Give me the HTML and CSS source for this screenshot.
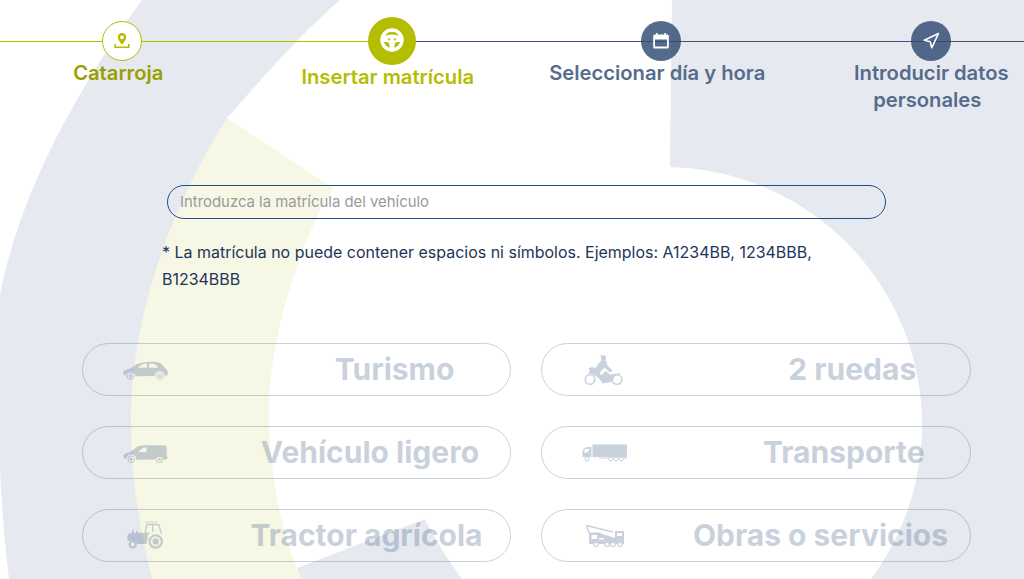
FILE: index.html
```html
<!DOCTYPE html>
<html lang="es">
<head>
  <meta charset="UTF-8" />
  <meta name="viewport" content="width=device-width, initial-scale=1" />
  <title>Cita previa ITV</title>
  <link rel="stylesheet" href="styles.css">
</head>
<body>

  <!-- Fondo -->
  <svg class="bg-shapes" viewBox="0 0 1024 579" aria-hidden="true">
    <path class="bg-gray" d="M142,0 L340,0 C300,35 265,75 227,118 L200,579 L9,579 Q3,530 0,470 L0,295 C20,190 80,85 142,0 Z" />
    <path class="bg-gray" d="M672,0 L1024,0 L1024,579 L871,579 A258,258 0 0 0 670,167 Z" />
    <path class="bg-gray" d="M297,568 L425,519 C435,540 448,560 462,579 L301,579 Z" />
    <path class="bg-yellow" d="M227,118 L333,188 C300,240 269,340 269,410 C269,470 280,530 301,579 L152,579 C140,530 131,480 131,420 C131,310 175,200 227,118 Z" />
  </svg>

  <!-- Pasos -->
  <div class="stepper">
    <div class="step step-done">
      <div class="step-circle">
        <svg width="20" height="20" viewBox="0 0 20 20">
          <path fill="#b5bd00" fill-rule="evenodd" d="M10,2 C7.6,2 5.8,3.8 5.8,6.2 C5.8,9 8.6,11.8 10,13.6 C11.4,11.8 14.2,9 14.2,6.2 C14.2,3.8 12.4,2 10,2 Z M10,4.4 A1.9,1.9 0 1 1 10,8.2 A1.9,1.9 0 1 1 10,4.4 Z" />
          <path fill="#b5bd00" d="M2.4,13 L4,13 L4,15.6 L16,15.6 L16,13 L17.6,13 L17.6,17 L2.4,17 Z" />
        </svg>
      </div>
      <div class="step-label">Catarroja</div>
    </div>
    <div class="step step-active">
      <div class="step-circle">
        <svg width="26" height="26" viewBox="0 1 26 26">
          <circle cx="13" cy="13" r="10" fill="none" stroke="#fff" stroke-width="3.4" />
          <path fill="#fff" d="M3,10 C8,6.6 18,6.6 23,10 L23,15 L18.6,15 C17,15 16,16 15.6,17.5 L15.4,22 L10.6,22 L10.4,17.5 C10,16 9,15 7.400,15 L3,15 Z" />
          <circle cx="10.200" cy="12.400" r="1.100" fill="#b5bd00" />
          <circle cx="15.800" cy="12.400" r="1.100" fill="#b5bd00" />
        </svg>
      </div>
      <div class="step-label">Insertar matrícula</div>
    </div>
    <div class="step">
      <div class="step-circle">
        <svg width="18" height="18" viewBox="0 0 18 18">
          <path fill="#fff" fill-rule="evenodd" d="M4,1 L5.6,1 L5.6,2.4 L12.4,2.4 L12.4,1 L14,1 L14,2.4 L15.2,2.4 C16.2,2.4 16.8,3 16.8,4 L16.8,15 C16.8,16 16.2,16.6 15.2,16.6 L2.8,16.6 C1.8,16.6 1.2,16 1.2,15 L1.2,4 C1.2,3 1.8,2.4 2.8,2.4 L4,2.4 Z M3,7.6 L3,14.4 L15,14.4 L15,7.6 Z" />
        </svg>
      </div>
      <div class="step-label">Seleccionar día y hora</div>
    </div>
    <div class="step step-last">
      <div class="step-circle">
        <svg width="18" height="18" viewBox="0 0 24 24">
          <polygon points="3 11 22 2 13 21 11 13 3 11" fill="none" stroke="#fff" stroke-width="2.2" stroke-linejoin="round" />
        </svg>
      </div>
      <div class="step-label">Introducir datos personales</div>
    </div>
  </div>

  <div class="content">
    <div class="plate-box">
      <input type="text" class="plate-input" placeholder="Introduzca la matrícula del vehículo">
      <p class="plate-note">* La matrícula no puede contener espacios ni símbolos. Ejemplos: A1234BB, 1234BBB, B1234BBB</p>
    </div>

    <div class="vehicle-grid">
      <div class="vehicle">
        <svg class="vehicle-icon" width="45" height="20" viewBox="0 0 45 20">
          <path fill-rule="evenodd" d="M0.5,14 C0,11 2,10 7,8.800 L13,4.600 C17,2.600 23,1.800 29,1.800 C35,1.800 38.500,3 40.500,6.500 C43,9 45,10.500 45,13 L44,15.500 L41.800,16 A5,5 0 0 0 31.800,16 L12.500,16.300 A5.200,5.200 0 0 0 2.200,16.200 Z M15,7.800 L24,7.800 L24,3.600 C20,3.800 17,5 15,7.800 Z M26,7.800 L35,7.800 C34.500,5.400 32,3.600 26,3.600 Z" />
          <circle cx="7.300" cy="16" r="3.400" fill="none" stroke="#2b4c7a" stroke-width="1" />
          <circle cx="7.300" cy="16" r="1.500" />
          <circle cx="36.800" cy="16" r="3.400" fill="none" stroke="#2b4c7a" stroke-width="1" />
          <circle cx="36.800" cy="16" r="1.500" />
        </svg>
        <div class="vehicle-name"><span>Turismo</span></div>
      </div>
      <div class="vehicle">
        <svg class="vehicle-icon" width="45" height="32" viewBox="0 0 45 32">
          <circle cx="21.500" cy="3.800" r="2.600" />
          <path d="M17.500,1.500 L20,1.800 L20,3.500 Z" />
          <path d="M19.500,6 L23.800,6.300 L25.500,11.500 L30.500,16.500 L28,18.500 L22.500,13.500 L17,19.500 L12.500,15 Z" />
          <path d="M6.500,14.500 C10,12.600 13,13 15,16 L19,21 L24,17 L28,20.500 L40,19 L33,22 L29,28 L21,29.500 L17,24.500 C13,20.500 9,19.500 6,19.500 L8,17 Z" />
          <circle cx="8" cy="25.500" r="4.800" fill="none" stroke="#2b4c7a" stroke-width="1.500" />
          <circle cx="35" cy="25.500" r="4.800" fill="none" stroke="#2b4c7a" stroke-width="1.500" />
        </svg>
        <div class="vehicle-name"><span>2 ruedas</span></div>
      </div>
      <div class="vehicle">
        <svg class="vehicle-icon" width="45" height="20" viewBox="0 0 45 20">
          <path fill-rule="evenodd" d="M0.500,14 C0,11.500 2,10.500 6,9.800 L14,4 C16,2.800 19,2.300 25,2.300 L41.500,2.200 C42.700,2.200 43.300,3 43.500,4 L44,14 L45,15 L43,16.500 L41,16.500 A5,5 0 0 0 32,16.500 L13.500,16.800 A5.200,5.200 0 0 0 3,16.500 Z M15,9 L23.500,9 L23.500,4.400 L20.500,4.400 Z" />
          <circle cx="8.300" cy="16.300" r="3.400" fill="none" stroke="#2b4c7a" stroke-width="1" />
          <circle cx="8.300" cy="16.300" r="1.500" />
          <circle cx="36.500" cy="16.300" r="3.400" fill="none" stroke="#2b4c7a" stroke-width="1" />
          <circle cx="36.500" cy="16.300" r="1.500" />
        </svg>
        <div class="vehicle-name"><span>Vehículo ligero</span></div>
      </div>
      <div class="vehicle">
        <svg class="vehicle-icon" width="45" height="18" viewBox="0 0 45 18">
          <rect x="10.500" y="0.500" width="34.500" height="12.500" />
          <path fill-rule="evenodd" d="M9.500,3 L9.500,13 L0.500,13 L0.500,9 C0.500,6 2,3.500 6,3 Z M3,5 L2,8.500 L5.500,8.500 L7.500,5 Z" />
          <path d="M17,13.500 L45,13.500 L45,14.500 L17,14.500 Z" />
          <circle cx="5" cy="15" r="2" fill="#fff" stroke="#2b4c7a" stroke-width="1" />
          <circle cx="29" cy="15" r="2" fill="#fff" stroke="#2b4c7a" stroke-width="1" />
          <circle cx="34" cy="15" r="2" fill="#fff" stroke="#2b4c7a" stroke-width="1" />
          <circle cx="39" cy="15" r="2" fill="#fff" stroke="#2b4c7a" stroke-width="1" />
        </svg>
        <div class="vehicle-name"><span>Transporte</span></div>
      </div>
      <div class="vehicle">
        <svg class="vehicle-icon" width="45" height="30" viewBox="0 0 45 30">
          <path d="M22,1 L34,1" fill="none" stroke="#2b4c7a" stroke-width="0.800" />
          <path d="M24,3.500 L35.500,3.500 L38.500,12.500 M24,3.500 L22,12 M29.700,3.500 L29.700,11" fill="none" stroke="#2b4c7a" stroke-width="1.300" />
          <path d="M4.500,15 C4.500,13 6.500,12 9,12 L9.500,8.500 L10.500,8.500 L11,12 L13,12 L13.500,9.500 L14.500,9.500 L15,12 L27,11.500 L25,14 L23.500,23 L14,23 C13,20 9,18.500 4.500,20 Z" />
          <circle cx="9.700" cy="23.500" r="3.100" fill="none" stroke="#2b4c7a" stroke-width="1.800" />
          <circle cx="32.700" cy="20.500" r="6.200" fill="none" stroke="#2b4c7a" stroke-width="2.200" />
          <circle cx="32.700" cy="20.500" r="3.200" />
        </svg>
        <div class="vehicle-name"><span>Tractor agrícola</span></div>
      </div>
      <div class="vehicle">
        <svg class="vehicle-icon" width="45" height="26" viewBox="0 0 45 26">
          <path d="M4.500,2.500 L31,9 M4.500,2.500 L7,10" fill="none" stroke="#2b4c7a" stroke-width="1.300" />
          <path fill-rule="evenodd" d="M7,9.500 L18,9.500 L20,11 L33,15 L33,8 L42,8 L42,21 L7,21 Z M9.500,12 L9.500,16 L15,16 L15,12 Z M17,15 L17,16.500 L22,16.500 L22,15 Z M35,10 L35,13 L40,13 L40,10 Z" />
          <circle cx="14" cy="21.500" r="2.200" fill="#fff" stroke="#2b4c7a" stroke-width="1.100" />
          <circle cx="25" cy="21.500" r="2.200" fill="#fff" stroke="#2b4c7a" stroke-width="1.100" />
          <circle cx="31" cy="21.500" r="2.200" fill="#fff" stroke="#2b4c7a" stroke-width="1.100" />
          <circle cx="38" cy="21.500" r="2.200" fill="#fff" stroke="#2b4c7a" stroke-width="1.100" />
        </svg>
        <div class="vehicle-name"><span>Obras o servicios</span></div>
      </div>
    </div>
  </div>

</body>
</html>
```

FILE: styles.css
```css
* {
  box-sizing: border-box;
  font-family: 'Inter', 'Liberation Sans', sans-serif;
}
html, body {
  height: 100%;
}
body {
  margin: 0;
  background: #fff;
  position: relative;
  overflow: hidden;
  color: #1d3557;
}
.bg-shapes {
  position: absolute;
  top: 0;
  left: 0;
  width: 1024px;
  height: 579px;
  z-index: -1;
}
.bg-gray {
  fill: #e6e9ef;
}
.bg-yellow {
  fill: #f6f7e5;
}

/* Pasos */
.stepper {
  position: relative;
  display: grid;
  grid-template-columns: repeat(4, 269.5px);
  height: 185px;
  margin-left: -13px;
  padding-top: 21px;
}
.stepper::before {
  content: "";
  position: absolute;
  top: 41px;
  left: 13px;
  width: 1024px;
  height: 1px;
  background: linear-gradient(to right, #b5bd00 392px, #3f5778 392px);
}
.step {
  position: relative;
  display: flex;
  flex-direction: column;
  align-items: center;
}
.step-circle {
  width: 40px;
  height: 40px;
  border-radius: 50%;
  display: flex;
  align-items: center;
  justify-content: center;
  background: rgba(48, 75, 115, 0.82);
}
.step-label {
  margin-right: 7px;
  margin-top: -2px;
  max-width: 230px;
  text-align: center;
  font-size: 20.2px;
  font-weight: 600;
  line-height: 27px;
  color: #566c8c;
}
.step-done .step-circle {
  background: #fff;
  border: 1.5px solid #b5bd00;
}
.step-done .step-label {
  color: #9a9f00;
}
.step-active {
  margin-top: -4px;
}
.step-active .step-circle {
  width: 48px;
  height: 48px;
  margin-left: 1px;
  background: #b5bd00;
}
.step-active .step-label {
  color: #b5bd00;
}
.step-last {
  padding-left: 1px;
}
.step-last .step-label {
  text-indent: 8px;
}

/* Matricula */
.content {
  width: 889px;
  margin-left: 82px;
}
.plate-box {
  width: 724px;
  margin-left: 80px;
}
.plate-input {
  display: block;
  width: 719px;
  height: 34px;
  margin-left: 5px;
  padding: 0 12px 1px;
  border: 1px solid #1f4e85;
  border-radius: 17px;
  background: transparent;
  font-size: 14.9px;
  outline: none;
}
.plate-input::placeholder {
  color: #9a9a9a;
  opacity: 1;
}
.plate-note {
  margin: 20px 0 0;
  font-size: 15.98px;
  line-height: 27px;
  color: #1d3557;
}

/* Vehiculos */
.vehicle-grid {
  display: grid;
  grid-template-columns: 429px 430px;
  gap: 30px;
  margin-top: 50px;
}
.vehicle {
  display: flex;
  align-items: center;
  height: 53px;
  padding-left: 40px;
  border: 1px solid #2b4c7a;
  border-radius: 27px;
  opacity: 0.25;
  color: #2b4c7a;
}
.vehicle-icon {
  flex: 0 0 45px;
  fill: #2b4c7a;
}
.vehicle-name {
  flex: 1;
  display: flex;
  justify-content: space-around;
  padding-bottom: 1px;
  font-size: 30px;
  font-weight: 700;
}
.vehicle-name::before {
  content: "";
}
```
